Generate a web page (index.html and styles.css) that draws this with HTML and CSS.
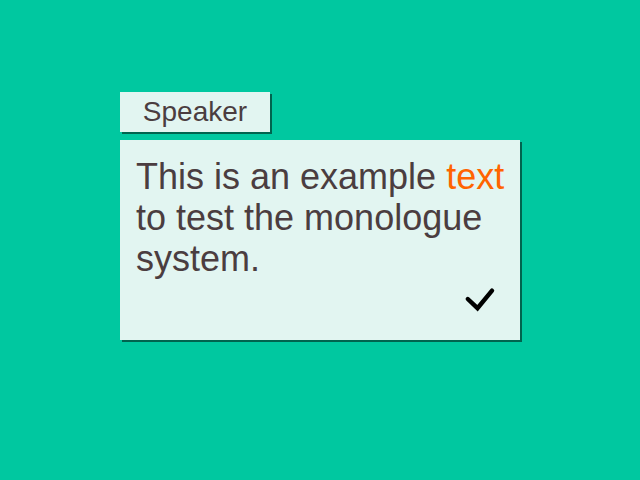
FILE: index.html
```html
<!DOCTYPE html>
<html lang="en">
<head>
<meta charset="utf-8">
<title>Monologue</title>
<link rel="stylesheet" href="styles.css">
</head>
<body>
<main class="dialogue">
  <h1 class="panel speaker">Speaker</h1>
  <section class="panel message">
    <p class="text">This is an example <span class="highlight">text</span> to test the monologue system.</p>
    <button class="confirm" type="button" aria-label="Continue">
      <svg viewBox="0 0 32 32" width="32" height="32" aria-hidden="true"><path d="M3.8 15 L13.5 24.2 L28 6.6" fill="none" stroke="#000" stroke-width="4.4" stroke-linecap="round"/></svg>
    </button>
  </section>
</main>
</body>
</html>
```
FILE: styles.css
```css
* {
  box-sizing: border-box;
}

body {
  margin: 0;
  min-height: 100vh;
  padding: 92px 24px 24px;
  background: #00c8a0;
  color: #4b3d40;
  font-family: "Liberation Sans", Arial, sans-serif;
}

.dialogue {
  display: flex;
  flex-direction: column;
  align-items: flex-start;
  gap: 8px;
  max-width: 400px;
  margin: 0 auto;
}

.panel {
  margin: 0;
  background: #e2f5f1;
  box-shadow: 2px 2px 0 #00644f;
}

.speaker {
  min-width: 150px;
  padding: 0 20px;
  font-size: 28px;
  font-weight: 400;
  line-height: 40px;
  text-align: center;
}

.message {
  display: flex;
  flex-direction: column;
  width: 100%;
  min-height: 200px;
  padding: 16px 8px 24px 16px;
}

.text {
  margin: 0;
  font-size: 36px;
  line-height: 41px;
}

.highlight {
  color: #ff6400;
}

.confirm {
  display: block;
  margin: auto 16px 0 auto;
  padding: 0;
  border: 0;
  background: none;
  cursor: pointer;
}

.confirm svg {
  display: block;
}
```
